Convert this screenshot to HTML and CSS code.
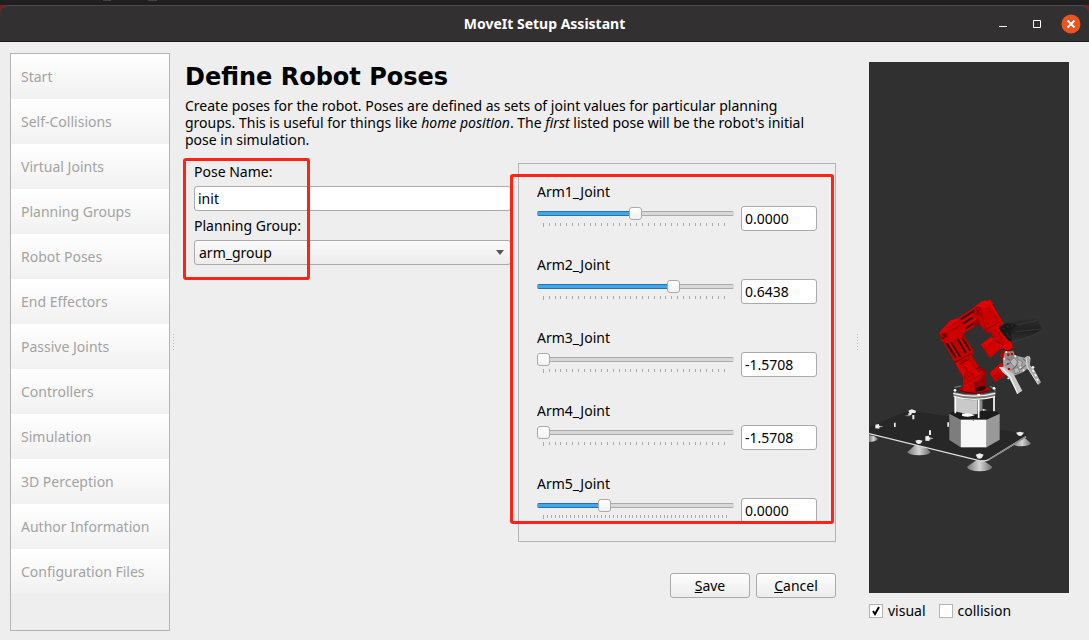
FILE: index.html
```html
<!DOCTYPE html>
<html lang="en">
<head>
  <meta charset="UTF-8">
  <meta name="viewport" content="width=device-width, initial-scale=1.0">
  <title>MoveIt Setup Assistant</title>
  <link rel="stylesheet" href="styles.css">
</head>
<body>
  <div class="window">
    <header class="titlebar">
      <h1>MoveIt Setup Assistant</h1>
      <div class="window-buttons">
        <button type="button" aria-label="Minimize">
          <svg width="20" height="20" viewBox="0 0 20 20"><path d="M6 12.5h8" stroke="#fff"/></svg>
        </button>
        <button type="button" aria-label="Maximize">
          <svg width="20" height="20" viewBox="0 0 20 20"><path d="M6.5 6.5h7v7h-7z" fill="none" stroke="#fff"/></svg>
        </button>
        <button type="button" aria-label="Close">
          <svg width="20" height="20" viewBox="0 0 20 20"><circle cx="10" cy="10" r="9.5" fill="#e95420"/><path d="M6.5 6.5l7 7M13.5 6.5l-7 7" stroke="#fff" stroke-width="1.8"/></svg>
        </button>
      </div>
    </header>

    <div class="content">
      <nav class="sidebar">
        <a href="#">Start</a>
        <a href="#">Self-Collisions</a>
        <a href="#">Virtual Joints</a>
        <a href="#">Planning Groups</a>
        <a href="#">Robot Poses</a>
        <a href="#">End Effectors</a>
        <a href="#">Passive Joints</a>
        <a href="#">Controllers</a>
        <a href="#">Simulation</a>
        <a href="#">3D Perception</a>
        <a href="#">Author Information</a>
        <a href="#">Configuration Files</a>
      </nav>

      <div class="splitter"></div>

      <main class="main">
        <h2>Define Robot Poses</h2>
        <p class="intro">Create poses for the robot. Poses are defined as sets of joint values for particular planning<br>groups. This is useful for things like <em>home position</em>. The <em>first</em> listed pose will be the robot's initial<br>pose in simulation.</p>

        <div class="editor">
          <form class="pose-form">
            <label for="poseName">Pose Name:</label>
            <input type="text" id="poseName" value="init">
            <label for="planningGroup">Planning Group:</label>
            <select id="planningGroup">
              <option>arm_group</option>
            </select>
            <div class="highlight highlight-form"></div>
          </form>

          <div class="joints">
            <div class="joint-list">
              <div class="joint">
                <label for="arm1">Arm1_Joint</label>
                <div class="slider">
                  <input type="range" id="arm1" min="-1.5708" max="1.5708" step="0.0001" value="0" style="--fill: 50%">
                  <svg class="ticks" width="183" height="5"><use href="#ticks"/></svg>
                </div>
                <input type="text" class="value" aria-label="Arm1_Joint value" value="0.0000">
              </div>
              <div class="joint">
                <label for="arm2">Arm2_Joint</label>
                <div class="slider">
                  <input type="range" id="arm2" min="-1.5708" max="1.5708" step="0.0001" value="0.6438" style="--fill: 70%">
                  <svg class="ticks" width="183" height="5"><use href="#ticks"/></svg>
                </div>
                <input type="text" class="value" aria-label="Arm2_Joint value" value="0.6438">
              </div>
              <div class="joint">
                <label for="arm3">Arm3_Joint</label>
                <div class="slider">
                  <input type="range" id="arm3" min="-1.5708" max="1.5708" step="0.0001" value="-1.5708" style="--fill: 0%">
                  <svg class="ticks" width="183" height="5"><use href="#ticks"/></svg>
                </div>
                <input type="text" class="value" aria-label="Arm3_Joint value" value="-1.5708">
              </div>
              <div class="joint">
                <label for="arm4">Arm4_Joint</label>
                <div class="slider">
                  <input type="range" id="arm4" min="-1.5708" max="1.5708" step="0.0001" value="-1.5708" style="--fill: 0%">
                  <svg class="ticks" width="183" height="5"><use href="#ticks"/></svg>
                </div>
                <input type="text" class="value" aria-label="Arm4_Joint value" value="-1.5708">
              </div>
              <div class="joint">
                <label for="arm5">Arm5_Joint</label>
                <div class="slider">
                  <input type="range" id="arm5" min="-1.5708" max="3.1416" step="0.0001" value="0" style="--fill: 34%">
                  <svg class="ticks" width="185" height="5"><use href="#ticks-fine"/></svg>
                </div>
                <input type="text" class="value" aria-label="Arm5_Joint value" value="0.0000">
              </div>
            </div>
            <div class="highlight highlight-joints"></div>
          </div>
        </div>

        <div class="actions">
          <button type="button"><u>S</u>ave</button>
          <button type="button"><u>C</u>ancel</button>
        </div>
      </main>

      <div class="splitter"></div>

      <aside class="preview">
        <div class="viewport">
          <svg viewBox="27 -654 600 1593" preserveAspectRatio="xMidYMid meet" role="img" aria-label="Robot arm">
            <defs>
              <linearGradient id="cup" x1="0" x2="1" y1="0" y2="0">
                <stop offset="0" stop-color="#777"/>
                <stop offset="0.5" stop-color="#d4d4d4"/>
                <stop offset="1" stop-color="#6c6c6c"/>
              </linearGradient>
              <linearGradient id="housing" x1="0" x2="0" y1="0" y2="1">
                <stop offset="0" stop-color="#2c2c2c"/>
                <stop offset="0.5" stop-color="#202020"/>
                <stop offset="1" stop-color="#343434"/>
              </linearGradient>
            </defs>

            <!-- suction cups -->
            <g fill="url(#cup)">
              <path d="M27 466L42 468L54 476Q50 485 27 486z"/>
              <path d="M168 493h18l26 23q-2 9-35 10q-32-1-35-10z"/>
              <path d="M349 541h20l28 19q-3 13-38 14q-35-1-38-14z"/>
              <path d="M470 472h22l21 18q-5 9-30 9q-18 0-24-6z"/>
            </g>

            <!-- base plate -->
            <path d="M27 442L134 397L170 394L270 410L420 450L496 461L500 470L385 540L358 542L27 461z" fill="#272727"/>
            <path d="M27 461L358 542Q376 545 386 539L498 470" fill="none" stroke="#ddd" stroke-width="4"/>
            <path d="M386 539L498 470" stroke="#888" stroke-width="4"/>
            <g fill="#eee">
              <path d="M145 392l10-4l13 4l-2 7h-10l-3 6l-8 2v-7h4z"/>
              <path d="M157 405h6v13h-6zM102 428h5v13h-5zM207 451h6v14h-6zM262 427h5v13h-5z"/>
              <path d="M46 434l11-2v5l13 2l-12 3v4l-12-1z"/>
              <path d="M196 469l11-2v5l13 3l-12 4v4l-12-1z"/>
              <path d="M166 482l10-3l12 3l-5 8q-6 4-13 0z"/>
              <path d="M347 524l12-4l12 4l-6 10q-6 4-13 0z"/>
              <path d="M468 458l12-3l12 3l-6 8q-6 4-12 0z"/>
            </g>
            <path d="M133 408l15-4v5zM60 438l9 2l-9 2zM210 474l9 2l-9 2z" fill="#999"/>

            <!-- pedestal -->
            <path d="M268 401L284 392H404L419 401L380 419H302z" fill="#1b1b1b"/>
            <path d="M268 401L302 419V502L268 480z" fill="#7d7d7d"/>
            <path d="M302 419H380V502H302z" fill="#f7f7f7"/>
            <path d="M380 419L419 401V479L380 502z" fill="#999"/>
            <circle cx="340" cy="421" r="2" fill="#777"/>
            <path d="M284 352L352 360V402L330 404L284 394z" fill="#c9c9c9"/>
            <path d="M352 360L368 361V390L352 400z" fill="#888"/>
            <path d="M368 361L404 352V391L380 396L368 388z" fill="#262626"/>
            <path d="M368 386l13 4l-13 3z" fill="#ddd"/>
            <path d="M306 401q20-4 38 5q-20 8-38 1z" fill="#fff"/>
            <path d="M286 350V400M356 345V414M402 345V394" stroke="#fff" stroke-width="5"/>
            <path d="M280 336Q341 350 406 335V350Q342 372 280 349z" fill="#777"/>
            <path d="M280 340Q341 357 406 340M281 349Q341 367 405 350" fill="none" stroke="#f5f5f5" stroke-width="4"/>
            <path d="M284 322L304 318M390 320L405 324V334" stroke="#aaa" stroke-width="2" fill="none"/>
            <g fill="#fff">
              <circle cx="285" cy="331" r="4"/>
              <circle cx="356" cy="344" r="4"/>
              <circle cx="402" cy="325" r="4"/>
            </g>

            <!-- shoulder -->
            <ellipse cx="344" cy="329" rx="46" ry="12" fill="#b50000"/>
            <path d="M301 331q42 18 86 0" stroke="#500" stroke-width="3" fill="none"/>
            <path d="M345 320l22-5l12 8l-11 9l-22 3z" fill="#300"/>
            <path d="M344 292L357 263Q374 262 377 274L376 318L350 322z" fill="#9b0000"/>
            <path d="M285 248L333 224L371 281L348 308L309 292z" fill="#c90000"/>
            <path d="M285 248L292 244L333 306L318 304z" fill="#e00000"/>
            <path d="M303 244l20-8l38 46l-20 14z" fill="#d90000" stroke="#870000" stroke-width="2"/>
            <path d="M347 267l13-4M351 274l16-6M301 250l24-10" stroke="#600" stroke-width="3"/>
            <path d="M309 334V293Q312 276 327 274Q341 276 343 291V334z" fill="#cf0000"/>
            <circle cx="327" cy="289" r="13" fill="none" stroke="#850000" stroke-width="2"/>
            <path d="M321 286l11 8M332 283l-9 13" stroke="#990000" stroke-width="2"/>

            <!-- lower link -->
            <path d="M245 178L310 165L340 210V222L290 248L281 243z" fill="#c40000"/>
            <path d="M259 188L288 233M273 187L300 230M293 177L318 219M308 176L331 213" stroke="#2e1111" stroke-width="6"/>
            <path d="M266 187L294 232M300 176L325 216" stroke="#df0000" stroke-width="4"/>
            <path d="M284 247L337 219" stroke="#700" stroke-width="3"/>

            <!-- elbow -->
            <path d="M238 158L270 122L294 115L322 141L310 166L260 190L245 183z" fill="#cb0000"/>
            <path d="M238 158L270 122L294 115L301 120L270 139L247 165z" fill="#e00000"/>
            <path d="M262 145l30-20M268 153l42-19M282 190l40-31" stroke="#8b0000" stroke-width="2"/>
            <circle cx="254" cy="166" r="10" fill="#a80000"/>
            <path d="M247 162l12 8M258 158l-8 15M244 171l8 7" stroke="#400" stroke-width="3"/>

            <!-- upper link -->
            <path d="M292 115L348 77L372 86L379 113L326 152L306 153z" fill="#c80000"/>
            <path d="M302 119L344 91M309 131L338 112M318 145L350 123" stroke="#361010" stroke-width="6"/>
            <path d="M305 124L344 99M314 138L348 116" stroke="#e00000" stroke-width="4"/>
            <path d="M336 126l18-13l10 18l-18 9z" fill="#9e0000"/>
            <path d="M347 79L365 64L391 61L430 132L416 140L380 160L360 133L369 104z" fill="#cd0000"/>
            <path d="M365 64L391 61L399 71L364 87L347 79z" fill="#e30000"/>
            <path d="M392 72L429 132" stroke="#f00000" stroke-width="3"/>
            <path d="M365 102L380 158M372 151l48-26M384 84l9 14M402 105l8 12" stroke="#920000" stroke-width="3"/>
            <circle cx="354" cy="94" r="12" fill="#c00000" stroke="#760000" stroke-width="2"/>
            <path d="M348 90l12 9M358 86l-8 16" stroke="#500" stroke-width="2"/>

            <!-- wrist -->
            <path d="M388 151L414 138L458 193L448 213L431 211L414 190L402 175z" fill="#c90000"/>
            <path d="M414 138L458 193L450 198L402 145z" fill="#dc0000"/>
            <path d="M363 193L394 170L429 201L389 234z" fill="#d00000"/>
            <path d="M363 193L394 170L401 177L370 204z" fill="#e20000"/>
            <path d="M405 180l30 20M410 152l16 24" stroke="#8a0000" stroke-width="3"/>
            <path d="M416 145L440 129L484 120L527 117L535 123L546 151L519 167L459 188L443 180z" fill="url(#housing)"/>
            <path d="M416 145L440 129L470 135L452 150L455 185L443 180z" fill="#191919"/>
            <path d="M470 135L532 121M466 155L544 147M459 187L519 166L546 151" stroke="#414141" stroke-width="2" fill="none"/>
            <path d="M429 143l5 4M440 137l5 4M454 135l5 3M440 160l5 4M447 169l4 5" stroke="#3b3b3b" stroke-width="3"/>
            <ellipse cx="443" cy="202" rx="15" ry="9" fill="#e00000"/>
            <path d="M430 207q14 9 27-1" stroke="#700" stroke-width="3" fill="none"/>
            <path d="M420 222l16-13l4 25l-14 9z" fill="#be0000"/>
            <path d="M389 279L424 248L442 284L404 306z" fill="#cb0000"/>
            <path d="M389 279L424 248L429 257L396 289z" fill="#e00000"/>
            <path d="M401 290l5-5M408 297l26-17" stroke="#850000" stroke-width="3"/>

            <!-- gripper -->
            <path d="M435 215L460 214L464 226L495 233L503 227L512 235L509 260L490 276L466 286L446 291L430 265L429 240z" fill="#a2a2a2"/>
            <path d="M436 218l20-3l8 16l-14 13l-16-4z" fill="#8a8a8a"/>
            <g fill="#d00000">
              <circle cx="445" cy="224" r="4"/>
              <circle cx="456" cy="222" r="4"/>
              <circle cx="444" cy="251" r="3"/>
              <circle cx="447" cy="267" r="4"/>
            </g>
            <path d="M450 245l13-12l12 15l-11 15zM474 238l14 8l-5 14l-14-3zM461 265l14-2l4 13l-14 5z" fill="#b8b8b8" stroke="#6b6b6b" stroke-width="2"/>
            <path d="M437 256l16-9M455 270l17-16M482 268l16-13M488 235l10 9M466 228l8 7M441 235l9 5" stroke="#5f5f5f" stroke-width="3"/>
            <g fill="#eee">
              <circle cx="433" cy="236" r="3"/>
              <circle cx="439" cy="216" r="3"/>
              <circle cx="466" cy="229" r="3"/>
              <circle cx="506" cy="233" r="4"/>
              <circle cx="481" cy="262" r="3"/>
              <circle cx="491" cy="271" r="3"/>
              <circle cx="445" cy="295" r="3"/>
            </g>
            <path d="M418 262L431 260L461 283L487 332L473 341L446 292L427 276z" fill="#c8c8c8"/>
            <path d="M418 262L430 268L451 291L473 341" stroke="#eee" stroke-width="4" fill="none"/>
            <path d="M497 230L507 228L511 257L520 264L543 307L534 315L507 271L498 265z" fill="#a8a8a8"/>
            <path d="M498 231L502 262L534 312" stroke="#ddd" stroke-width="3" fill="none"/>
            <path d="M517 270l5 6M524 283l5 6M530 296l5 6" stroke="#f5f5f5" stroke-width="5"/>
            <circle cx="519" cy="262" r="4" fill="#eee"/>
          </svg>
        </div>
        <div class="checks">
          <label><input type="checkbox" checked>visual</label>
          <label><input type="checkbox">collision</label>
        </div>
      </aside>
    </div>
  </div>

  <svg class="sprite" width="0" height="0" aria-hidden="true">
    <defs>
      <pattern id="tick-pattern" width="35" height="5" patternUnits="userSpaceOnUse">
        <path d="M0 0h1v3h-1zM6 0h1v3h-1zM12 0h1v3h-1zM17 0h1v3h-1zM23 0h1v3h-1zM29 0h1v3h-1z" fill="#aaa"/>
      </pattern>
      <pattern id="tick-pattern-fine" width="35" height="5" patternUnits="userSpaceOnUse">
        <path d="M0 0h1v3h-1zM4 0h1v3h-1zM8 0h1v3h-1zM12 0h1v3h-1zM16 0h1v3h-1zM19 0h1v3h-1zM23 0h1v3h-1zM27 0h1v3h-1zM31 0h1v3h-1z" fill="#aaa"/>
      </pattern>
      <symbol id="ticks">
        <path d="M0 0h183v5h-183z" fill="url(#tick-pattern)"/>
        <path d="M0 0h1v4h-1z" fill="#aaa"/>
      </symbol>
      <symbol id="ticks-fine">
        <path d="M0 0h185v5h-185z" fill="url(#tick-pattern-fine)"/>
        <path d="M0 0h1v4h-1z" fill="#aaa"/>
      </symbol>
    </defs>
  </svg>
</body>
</html>
```
FILE: styles.css
```css
* {
  margin: 0;
  padding: 0;
  box-sizing: border-box;
}
body {
  font-family: "Noto Sans", "Open Sans", sans-serif;
  font-size: 14px;
  line-height: 18px;
  color: #000;
  background: #1f1f1f;
}
input, select, button {
  font: inherit;
  color: inherit;
}
.window {
  display: flex;
  flex-direction: column;
  min-height: 100vh;
  padding-top: 5px;
  background:
    linear-gradient(#444, #444) 103px 0 / 8px 1px no-repeat,
    linear-gradient(#444, #444) 148px 0 / 9px 1px no-repeat,
    linear-gradient(#1f1f1f, #1f1f1f) 0 0 / 100% 5px no-repeat,
    #7a1d1d;
}

/* title bar */
.titlebar {
  display: grid;
  grid-template-columns: 1fr auto 1fr;
  align-items: center;
  height: 37px;
  padding: 0 8px;
  background: #333031;
  border-top: 1px solid #4b494a;
  border-bottom: 1px solid #1b1a1a;
  border-radius: 8px 8px 0 0;
  color: #fff;
}
.titlebar h1 {
  grid-column: 2;
  font-size: 14px;
  font-weight: bold;
}
.window-buttons {
  display: flex;
  justify-content: flex-end;
  gap: 14px;
}
.window-buttons button {
  width: 20px;
  height: 20px;
  border: none;
  background: none;
}
.window-buttons svg {
  display: block;
}

.content {
  flex: 1;
  display: flex;
  padding: 11px 20px 9px 10px;
  background: #eee;
}

/* steps */
.sidebar {
  flex: 0 0 160px;
  border: 1px solid #b4b4b4;
}
.sidebar a {
  display: block;
  height: 45px;
  padding: 0 10px;
  line-height: 45px;
  color: #a3a3a3;
  text-decoration: none;
  white-space: nowrap;
  background: linear-gradient(#fff, #f1f1f1);
}
.splitter {
  flex: 0 0 6px;
  align-self: center;
  height: 17px;
  background: repeating-linear-gradient(#bbb 0 1px, transparent 1px 3px) 3px 0 / 1px 100% no-repeat;
}

/* pose editor */
.main {
  flex: 1;
  min-width: 0;
  display: flex;
  flex-direction: column;
  padding: 10px 18px 33px 9px;
}
.main h2 {
  font-family: "DejaVu Sans", sans-serif;
  font-size: 24px;
  line-height: 28px;
}
.intro {
  margin-top: 6px;
  line-height: 17px;
}
.editor {
  flex: 1;
  display: grid;
  grid-template-columns: 41fr 40fr;
  gap: 7px;
  margin-top: 15px;
}
.pose-form {
  position: relative;
  padding-left: 9px;
}
.pose-form label {
  display: block;
}
.pose-form input,
.pose-form select,
.value {
  display: block;
  width: 100%;
  height: 25px;
  padding: 0 3px;
  border: 1px solid #aaa;
  border-radius: 3px;
  background: #fff;
}
.pose-form input,
.pose-form select {
  margin: 5px 0 6px;
}
.pose-form select {
  appearance: none;
  padding: 0 4px;
  background:
    url("data:image/svg+xml,%3Csvg xmlns='http://www.w3.org/2000/svg' width='8' height='5'%3E%3Cpath d='M0 0h8L4 5z' fill='%23555'/%3E%3C/svg%3E") right 6px center no-repeat,
    linear-gradient(#fbfbfb, #ececec);
}
.joints {
  position: relative;
  padding: 18px 18px 20px;
  border: 1px solid #b4b4b4;
}
.joint-list {
  height: 339px;
  overflow: hidden;
}
.joint {
  display: grid;
  grid-template-columns: 1fr 76px;
  column-gap: 7px;
  height: 73px;
  align-content: start;
}
.joint label {
  grid-column: 1 / 3;
  height: 24px;
  line-height: 20px;
}
.slider {
  padding-top: 1px;
}
.slider input {
  display: block;
  width: 100%;
  height: 13px;
  appearance: none;
  background: none;
}
.slider input::-webkit-slider-runnable-track {
  height: 5px;
  border-radius: 2px;
  background:
    linear-gradient(#2574a9 0 1px, #43a6e8 1px 4px, #2574a9 4px) 0 0 / var(--fill) 100% no-repeat,
    linear-gradient(#aaa 0 1px, #d8d8d8 1px 4px, #aaa 4px);
}
.slider input::-webkit-slider-thumb {
  appearance: none;
  width: 13px;
  height: 13px;
  margin-top: -4px;
  border: 1px solid #aaa;
  border-radius: 3px;
  background: linear-gradient(#fff, #f2f2f2);
}
.ticks {
  display: block;
  margin: 3px 0 0 6px;
}
.highlight {
  position: absolute;
  border: 3px solid #ff2316;
  border-radius: 3px;
  pointer-events: none;
}
.highlight-form {
  top: -5px;
  left: -2px;
  width: 127px;
  height: 122px;
}
.highlight-joints {
  top: 10px;
  left: -9px;
  right: 1px;
  bottom: 17px;
}
.actions {
  display: flex;
  justify-content: flex-end;
  gap: 6px;
  margin-top: 31px;
}
.actions button {
  width: 80px;
  height: 25px;
  border: 1px solid #aaa;
  border-radius: 3px;
  background: linear-gradient(#fdfdfd, #ededed);
}

/* robot preview */
.preview {
  flex: 0 0 209px;
  display: flex;
  flex-direction: column;
  padding: 9px 0 11px 9px;
}
.viewport {
  flex: 1;
  display: flex;
  background: #303030;
}
.viewport svg {
  width: 100%;
}
.checks {
  display: flex;
  gap: 13px;
  margin-top: 9px;
}
.checks label {
  display: flex;
  align-items: center;
  gap: 5px;
}
.checks input {
  appearance: none;
  width: 14px;
  height: 14px;
  border: 1px solid #b4b4b4;
  background: #fff;
}
.checks input:checked {
  background: #fff url("data:image/svg+xml,%3Csvg xmlns='http://www.w3.org/2000/svg' width='12' height='12'%3E%3Cpath d='M3 6l2 3l4-7' fill='none' stroke='%23000' stroke-width='2'/%3E%3C/svg%3E") center no-repeat;
}
.sprite {
  position: absolute;
}
```
